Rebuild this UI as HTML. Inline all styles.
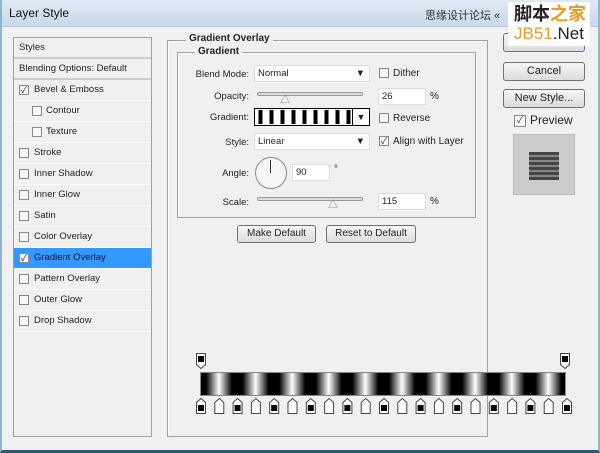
<!DOCTYPE html><html><head><style>
*{margin:0;padding:0;box-sizing:border-box}
body{width:600px;height:453px;overflow:hidden;background:#f0f0f0;font-family:"Liberation Sans","Noto Sans CJK SC",sans-serif;font-size:10px;color:#222;position:relative}
.a{position:absolute}
.title{left:0;top:0;width:600px;height:27px;background:linear-gradient(#dfe9f3,#c9d9ea);border-bottom:1px solid #b9c9d9}
.win{left:0;top:0;width:600px;height:453px;border:2px solid #8fb3d1;border-bottom:3px solid #2a5b73;border-top:none}
.list{left:13px;top:37px;width:139px;height:400px;border:1px solid #a0a0a0;background:#f0f0f0}
.row{position:absolute;left:0;width:137px;height:21px;border-bottom:1px solid #fff;padding-left:20px;line-height:20px;font-size:9.5px}
.cb{position:absolute;width:10px;height:10px;border:1px solid #888;background:#f8f8f8;font-size:9px;line-height:8px;text-align:center;color:#333}
.grp{border:1px solid #a0a0a0;box-shadow:1px 1px 0 #fff inset}
.lbl{text-align:right;width:70px;font-size:9.5px}
.inp{background:#fff;border:1px solid #ddd;font-size:9.5px;padding-left:3px;line-height:16px;height:17px}
.btn{border:1px solid #707070;border-radius:3px;background:linear-gradient(#f6f6f6,#dcdcdc);text-align:center;font-size:11px;line-height:16px}
.sl{height:4px;border:1px solid #999;border-radius:2px;background:#ddd}
.st{position:absolute;top:397px}
</style></head><body>
<div class="a title"></div>
<div class="a" style="left:9px;top:6px;font-size:12px;color:#111">Layer Style</div>
<div class="a" style="left:425px;top:7px;font-size:11px;color:#333">思缘设计论坛 «</div>
<div class="a win"></div>

<div class="a list">
<div class="row" style="top:0;padding-left:5px;border-bottom:2px solid #ccc">Styles</div>
<div class="row" style="top:21px;padding-left:5px;border-bottom:2px solid #ccc">Blending Options: Default</div>
<div class="row" style="top:42px"><span class="cb" style="left:5px;top:5px">✓</span>Bevel &amp; Emboss</div>
<div class="row" style="top:63px;padding-left:32px"><span class="cb" style="left:18px;top:5px"></span>Contour</div>
<div class="row" style="top:84px;padding-left:32px"><span class="cb" style="left:18px;top:5px"></span>Texture</div>
<div class="row" style="top:105px"><span class="cb" style="left:5px;top:5px"></span>Stroke</div>
<div class="row" style="top:126px"><span class="cb" style="left:5px;top:5px"></span>Inner Shadow</div>
<div class="row" style="top:147px"><span class="cb" style="left:5px;top:5px"></span>Inner Glow</div>
<div class="row" style="top:168px"><span class="cb" style="left:5px;top:5px"></span>Satin</div>
<div class="row" style="top:189px"><span class="cb" style="left:5px;top:5px"></span>Color Overlay</div>
<div class="row" style="top:210px;background:#3399ff;color:#113"><span class="cb" style="left:5px;top:5px">✓</span>Gradient Overlay</div>
<div class="row" style="top:231px"><span class="cb" style="left:5px;top:5px"></span>Pattern Overlay</div>
<div class="row" style="top:252px"><span class="cb" style="left:5px;top:5px"></span>Outer Glow</div>
<div class="row" style="top:273px"><span class="cb" style="left:5px;top:5px"></span>Drop Shadow</div>
</div>

<div class="a grp" style="left:167px;top:40px;width:321px;height:397px"></div>
<div class="a" style="left:186px;top:33px;background:#f0f0f0;padding:0 3px;font-weight:bold;font-size:10px">Gradient Overlay</div>
<div class="a grp" style="left:177px;top:52px;width:299px;height:166px"></div>
<div class="a" style="left:195px;top:46px;background:#f0f0f0;padding:0 3px;font-weight:bold;font-size:10px">Gradient</div>

<div class="a lbl" style="left:179px;top:69px">Blend Mode:</div>
<div class="a inp" style="left:254px;top:65px;width:116px">Normal<span style="position:absolute;right:4px;top:0">▼</span></div>
<div class="a lbl" style="left:179px;top:91px">Opacity:</div>
<div class="a sl" style="left:257px;top:92px;width:106px"></div>
<div class="a" style="left:280px;top:91px;font-size:10px;color:#777">△</div>
<div class="a inp" style="left:378px;top:88px;width:48px">26</div>
<div class="a" style="left:430px;top:91px">%</div>
<div class="a lbl" style="left:179px;top:112px">Gradient:</div>
<div class="a" style="left:254px;top:108px;width:116px;height:18px;border:1px solid #000;background:repeating-linear-gradient(90deg,#fff 0,#fff 3px,#000 4px,#000 7px,#fff 8px,#fff 11px);box-shadow:inset 0 0 0 1px #fff"></div>
<div class="a" style="left:352px;top:108px;width:18px;height:18px;border:1px solid #000;background:#fff;text-align:center;font-size:9px;line-height:16px">▼</div>
<div class="a lbl" style="left:179px;top:137px">Style:</div>
<div class="a inp" style="left:254px;top:133px;width:116px">Linear<span style="position:absolute;right:4px;top:0">▼</span></div>
<div class="a lbl" style="left:179px;top:168px">Angle:</div>
<div class="a" style="left:255px;top:157px;width:32px;height:32px;border:1px solid #888;border-radius:50%;background:#f6f6f6"></div>
<div class="a" style="left:270px;top:160px;width:1px;height:13px;background:#333"></div>
<div class="a inp" style="left:292px;top:164px;width:38px">90</div>
<div class="a" style="left:334px;top:164px">°</div>
<div class="a lbl" style="left:179px;top:197px">Scale:</div>
<div class="a sl" style="left:257px;top:197px;width:106px"></div>
<div class="a" style="left:328px;top:196px;font-size:10px;color:#777">△</div>
<div class="a inp" style="left:378px;top:193px;width:48px">115</div>
<div class="a" style="left:430px;top:196px">%</div>

<div class="a cb" style="left:379px;top:68px"></div><div class="a" style="left:393px;top:68px">Dither</div>
<div class="a cb" style="left:379px;top:113px"></div><div class="a" style="left:393px;top:113px">Reverse</div>
<div class="a cb" style="left:379px;top:136px">✓</div><div class="a" style="left:393px;top:136px">Align with Layer</div>

<div class="a btn" style="left:237px;top:225px;width:79px;font-size:10px">Make Default</div>
<div class="a btn" style="left:326px;top:225px;width:90px;font-size:10px">Reset to Default</div>

<div class="a btn" style="left:503px;top:33px;width:82px;height:19px;border-color:#3c7fb1">OK</div>
<div class="a btn" style="left:503px;top:62px;width:82px;height:19px">Cancel</div>
<div class="a btn" style="left:503px;top:89px;width:82px;height:19px">New Style...</div>
<div class="a cb" style="left:514px;top:115px;width:12px;height:12px">✓</div>
<div class="a" style="left:530px;top:113px;font-size:12px">Preview</div>
<div class="a" style="left:513px;top:134px;width:62px;height:61px;background:#ccc;border:1px solid #bbb"></div>
<div class="a" style="left:529px;top:152px;width:30px;height:28px;background:repeating-linear-gradient(#444 0,#444 3px,#888 3px,#888 5px)"></div>

<div class="a" style="left:508px;top:2px;width:82px;height:44px;background:#fff"></div>
<div class="a" style="left:514px;top:3px;font-size:18px;color:#222;font-weight:bold;line-height:22px">脚本<span style="color:#e89b2a">之家</span></div>
<div class="a" style="left:514px;top:24px;font-size:17px;color:#e89b2a;line-height:20px">JB51<span style="color:#222">.Net</span></div>

<svg class="a" style="left:194px;top:352px" width="380" height="62">
<g stroke="#444" fill="#fff"><path d="M2.5 1.5h9v11l-4.5 4l-4.5-4z"/><rect x="4" y="4" width="6" height="6" fill="#000" stroke="none"/>
<path d="M366.5 1.5h9v11l-4.5 4l-4.5-4z"/><rect x="368" y="4" width="6" height="6" fill="#000" stroke="none"/></g>
</svg>
<div class="a" style="left:200px;top:372px;width:366px;height:24px;border:1px solid #888;background:repeating-linear-gradient(90deg,#000 0,#000 5px,#fff 18px,#000 31px,#000 36.6px)"></div>
<svg class="a" style="left:194px;top:397px" width="380" height="18">
<g stroke="#444" fill="#fff" id="s">
<path d="M2.5 16.5v-11l4.5-4l4.5 4v11z"/>
</g>
</svg>
<svg class="a" style="left:194px;top:397px" width="380" height="18" fill="#fff" stroke="#444">
<path d="M2.5 16.5v-11l4.5-4l4.5 4v11z"/><path d="M20.8 16.5v-11l4.5-4l4.5 4v11z"/><path d="M39.1 16.5v-11l4.5-4l4.5 4v11z"/><path d="M57.4 16.5v-11l4.5-4l4.5 4v11z"/><path d="M75.7 16.5v-11l4.5-4l4.5 4v11z"/><path d="M94 16.5v-11l4.5-4l4.5 4v11z"/><path d="M112.3 16.5v-11l4.5-4l4.5 4v11z"/><path d="M130.6 16.5v-11l4.5-4l4.5 4v11z"/><path d="M148.9 16.5v-11l4.5-4l4.5 4v11z"/><path d="M167.2 16.5v-11l4.5-4l4.5 4v11z"/><path d="M185.5 16.5v-11l4.5-4l4.5 4v11z"/><path d="M203.8 16.5v-11l4.5-4l4.5 4v11z"/><path d="M222.1 16.5v-11l4.5-4l4.5 4v11z"/><path d="M240.4 16.5v-11l4.5-4l4.5 4v11z"/><path d="M258.7 16.5v-11l4.5-4l4.5 4v11z"/><path d="M277 16.5v-11l4.5-4l4.5 4v11z"/><path d="M295.3 16.5v-11l4.5-4l4.5 4v11z"/><path d="M313.6 16.5v-11l4.5-4l4.5 4v11z"/><path d="M331.9 16.5v-11l4.5-4l4.5 4v11z"/><path d="M350.2 16.5v-11l4.5-4l4.5 4v11z"/><path d="M368.5 16.5v-11l4.5-4l4.5 4v11z"/>
<g fill="#000" stroke="none"><rect x="4" y="8" width="6" height="6"/><rect x="40.6" y="8" width="6" height="6"/><rect x="77.2" y="8" width="6" height="6"/><rect x="113.8" y="8" width="6" height="6"/><rect x="150.4" y="8" width="6" height="6"/><rect x="187" y="8" width="6" height="6"/><rect x="223.6" y="8" width="6" height="6"/><rect x="260.2" y="8" width="6" height="6"/><rect x="296.8" y="8" width="6" height="6"/><rect x="333.4" y="8" width="6" height="6"/><rect x="370" y="8" width="6" height="6"/></g>
</svg>
</body></html>
